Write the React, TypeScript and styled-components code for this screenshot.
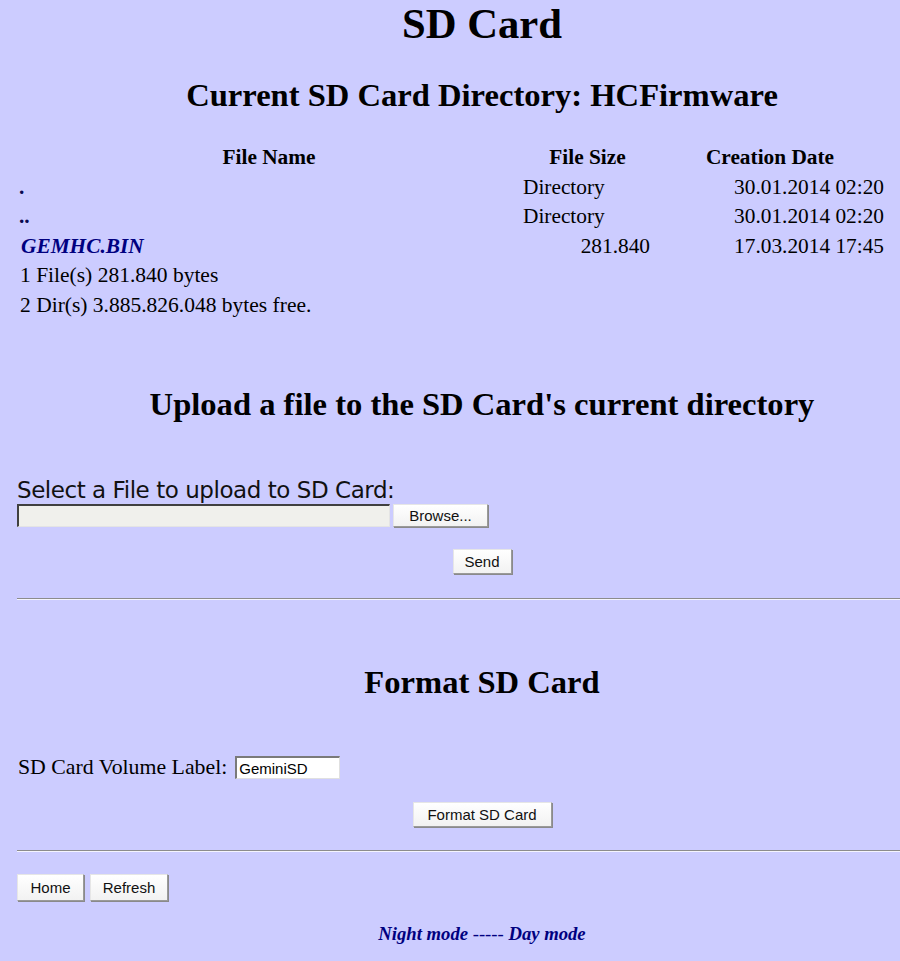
import React from "react";
import styled, { createGlobalStyle } from "styled-components";

const Global = createGlobalStyle`
  html, body {
    margin: 0;
    padding: 0;
    background: #ccccff;
    overflow: hidden;
  }
  body {
    font-family: "Liberation Serif", "Times New Roman", serif;
    font-size: 21.33px;
    color: #000;
  }
`;

const Page = styled.div`
  width: 930px;
  padding-left: 17px;
  padding-bottom: 20px;
`;

const Title = styled.h1`
  margin: 0;
  font: bold 42.67px/48px "Liberation Serif", serif;
  text-align: center;
`;

const SectionTitle = styled.h2<{ $mt: number }>`
  margin: ${(p) => p.$mt}px 0 0;
  font: bold 32.6px/40px "Liberation Serif", serif;
  text-align: center;
`;

const Table = styled.table`
  margin-top: 28px;
  border-collapse: collapse;
  table-layout: fixed;
  width: 869px;
`;

const Th = styled.th`
  height: 29.5px;
  padding: 0;
  font: bold 21.33px/29.5px "Liberation Serif", serif;
  text-align: center;
`;

const Td = styled.td<{ $align?: "left" | "right"; $pr?: number; $pl?: number }>`
  height: 29.5px;
  padding: 0 ${(p) => p.$pr ?? 0}px 0 ${(p) => p.$pl ?? 1}px;
  font: 21.33px/29.5px "Liberation Serif", serif;
  text-align: ${(p) => p.$align ?? "left"};
  white-space: nowrap;
`;

const NavLink = styled.a<{ $italic?: boolean }>`
  color: ${(p) => (p.$italic ? "#000080" : "#0a0a50")};
  font-weight: bold;
  font-style: ${(p) => (p.$italic ? "italic" : "normal")};
  text-decoration: none;
`;

const Summary = styled.div`
  padding-left: 3px;
  font: 21.5px/29.5px "Liberation Serif", serif;
`;

const UploadLabel = styled.div`
  margin-top: 54px;
  font: 23px/24px "DejaVu Sans", Verdana, sans-serif;
  letter-spacing: -0.45px;
  color: #111;
`;

const FileRow = styled.div`
  margin-top: 2px;
  display: flex;
  align-items: flex-start;
  gap: 3px;
  height: 23px;
`;

const FileField = styled.div`
  box-sizing: border-box;
  width: 373px;
  height: 23px;
  background: #f0f0ec;
  border-top: 2px solid #404040;
  border-left: 2px solid #404040;
  border-bottom: 1px solid #e4e4e4;
  border-right: 1px solid #e4e4e4;
`;

const Button = styled.button<{ $w: number; $h: number }>`
  box-sizing: border-box;
  width: ${(p) => p.$w}px;
  height: ${(p) => p.$h}px;
  padding: 0;
  font: 15px "Liberation Sans", Arial, sans-serif;
  color: #111;
  background: linear-gradient(#ffffff, #f2f2f2);
  border: 1px solid #9a9a9a;
  border-top-color: #e6e6e6;
  border-left-color: #e6e6e6;
  box-shadow: 1px 1px 0 #8a8a8a;
  border-radius: 0;
`;

const CenterRow = styled.div<{ $mt: number }>`
  margin-top: ${(p) => p.$mt}px;
  display: flex;
  justify-content: center;
`;

const Rule = styled.hr<{ $mt: number }>`
  margin: ${(p) => p.$mt}px 0 0;
  height: 0;
  border: 0;
  border-top: 1px solid #8c8c8c;
  border-bottom: 1px solid #f4f4ff;
`;

const LabelRow = styled.div`
  margin-top: 54px;
  display: flex;
  align-items: center;
  gap: 8px;
  height: 23px;
  padding-left: 1px;
  font: 21.8px/23px "Liberation Serif", serif;
`;

const TextInput = styled.input`
  box-sizing: border-box;
  width: 105px;
  height: 23px;
  padding: 0 2px;
  font: 15px "Liberation Sans", Arial, sans-serif;
  color: #000;
  background: #fff;
  border: 1px solid #e0e0e0;
  border-top: 2px solid #7a7a7a;
  border-left: 2px solid #7a7a7a;
  outline: none;
`;

const ButtonBar = styled.div`
  margin-top: 22px;
  display: flex;
  gap: 6px;
`;

const ModeLine = styled.div`
  margin-top: 21px;
  text-align: center;
  font: italic 18.67px/24px "Liberation Serif", serif;
  color: #000080;
`;

const ModeLink = styled.a`
  color: #000080;
  font-weight: bold;
  text-decoration: none;
`;

type Row = { name: string; italic?: boolean; size: string; isDir: boolean; date: string };

const rows: Row[] = [
  { name: ".", size: "Directory", isDir: true, date: "30.01.2014 02:20" },
  { name: "..", size: "Directory", isDir: true, date: "30.01.2014 02:20" },
  { name: "GEMHC.BIN", italic: true, size: "281.840", isDir: false, date: "17.03.2014 17:45" },
];

export default function App() {
  return (
    <Page>
      <Global />
      <Title>SD Card</Title>
      <SectionTitle $mt={27}>Current SD Card Directory: HCFirmware</SectionTitle>
      <Table>
        <colgroup>
          <col style={{ width: 504 }} />
          <col style={{ width: 133 }} />
          <col style={{ width: 232 }} />
        </colgroup>
        <thead>
          <tr>
            <Th>File Name</Th>
            <Th>File Size</Th>
            <Th>Creation Date</Th>
          </tr>
        </thead>
        <tbody>
          {rows.map((r) => (
            <tr key={r.name}>
              <Td $pl={r.italic ? 4 : 2}>
                <NavLink href="#" $italic={r.italic}>
                  {r.name}
                </NavLink>
              </Td>
              <Td $align={r.isDir ? "left" : "right"} $pr={r.isDir ? 0 : 4} $pl={2}>
                {r.size}
              </Td>
              <Td $align="right" $pr={2}>
                {r.date}
              </Td>
            </tr>
          ))}
        </tbody>
      </Table>
      <Summary>1 File(s) 281.840 bytes</Summary>
      <Summary>2 Dir(s) 3.885.826.048 bytes free.</Summary>

      <SectionTitle $mt={64}>Upload a file to the SD Card's current directory</SectionTitle>
      <UploadLabel>Select a File to upload to SD Card:</UploadLabel>
      <FileRow>
        <FileField />
        <Button $w={95} $h={23}>Browse...</Button>
      </FileRow>
      <CenterRow $mt={22}>
        <Button $w={59} $h={25}>Send</Button>
      </CenterRow>
      <Rule $mt={24} />

      <SectionTitle $mt={62}>Format SD Card</SectionTitle>
      <LabelRow>
        SD Card Volume Label:
        <TextInput defaultValue="GeminiSD" />
      </LabelRow>
      <CenterRow $mt={23}>
        <Button $w={139} $h={25}>Format SD Card</Button>
      </CenterRow>
      <Rule $mt={23} />
      <ButtonBar>
        <Button $w={67} $h={27}>Home</Button>
        <Button $w={78} $h={27}>Refresh</Button>
      </ButtonBar>
      <ModeLine>
        <ModeLink href="#">Night mode</ModeLink> ----- <ModeLink href="#">Day mode</ModeLink>
      </ModeLine>
    </Page>
  );
}
